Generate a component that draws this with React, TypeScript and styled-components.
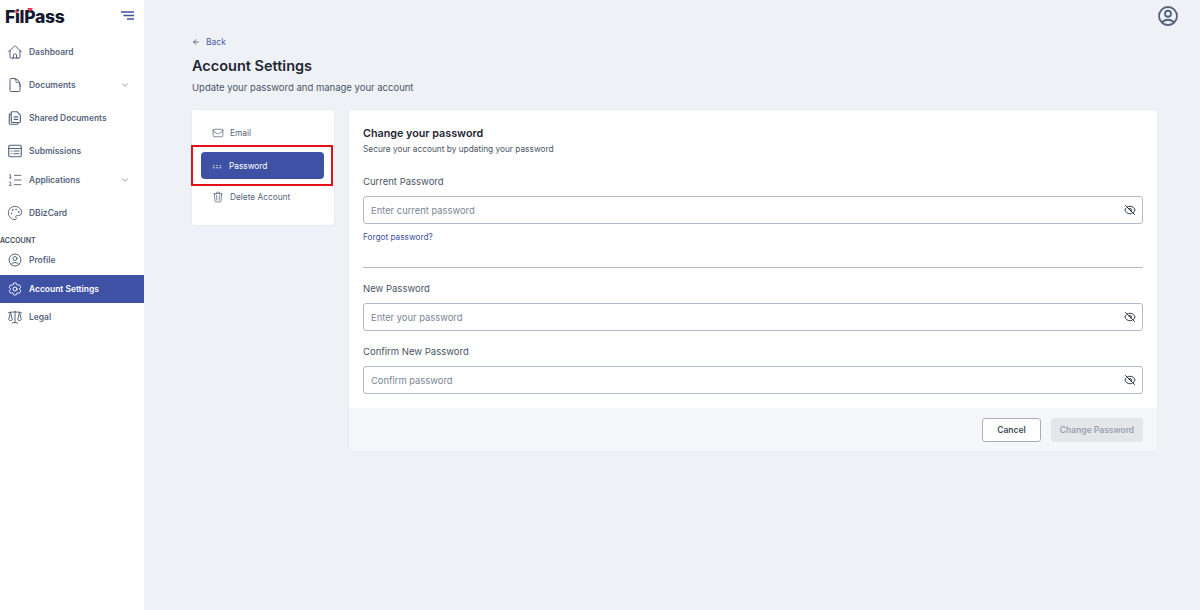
import styled, { createGlobalStyle } from "styled-components";
import { ChevronDown, ArrowLeft, Palette, ListOrdered } from "lucide-react";
import {
  HiOutlineHome,
  HiOutlineDocument,
  HiOutlineUserCircle,
  HiOutlineCog6Tooth,
  HiOutlineScale,
  HiOutlineEnvelope,
  HiOutlineTrash,
  HiOutlineEyeSlash,
} from "react-icons/hi2";
import type { ReactNode } from "react";

const GlobalStyle = createGlobalStyle`
  html, body {
    margin: 0;
    padding: 0;
    height: 100%;
    background: #eef1f6;
    font-family: Inter, "Liberation Sans", sans-serif;
  }
  * { box-sizing: border-box; }
`;

const Shell = styled.div`
  display: flex;
  width: 1200px;
  height: 610px;
  overflow: hidden;
`;

const Sidebar = styled.aside`
  width: 144px;
  flex: none;
  background: #fff;
`;

const LogoBar = styled.div`
  height: 35px;
  display: flex;
  align-items: center;
  justify-content: space-between;
  padding: 0 10px 3px 5px;
`;

const Logo = styled.div`
  position: relative;
  font-family: Inter, "Liberation Sans", sans-serif;
  font-weight: 800;
  font-size: 17.5px;
  letter-spacing: -0.3px;
  color: #14192f;
`;

const LogoMark = styled.span`
  position: absolute;
  top: 2px;
  left: 22px;
  width: 0;
  height: 0;
  border-left: 3.5px solid transparent;
  border-right: 3.5px solid transparent;
  border-top: 4px solid #e8394a;
`;

const LogoDot = styled.span`
  position: absolute;
  top: 4px;
  left: 10px;
  width: 3px;
  height: 3px;
  border-radius: 50%;
  background: #e8394a;
`;

const NavItem = styled.div<{ $h?: number; $active?: boolean }>`
  height: ${(p) => p.$h ?? 33.2}px;
  display: flex;
  align-items: center;
  gap: 6px;
  padding: 0 14px 0 7px;
  font-size: 8.45px;
  font-weight: 600;
  color: ${(p) => (p.$active ? "#fff" : "#56657d")};
  background: ${(p) => (p.$active ? "#3f51a5" : "transparent")};

  svg {
    flex: none;
    color: ${(p) => (p.$active ? "#fff" : "#56657d")};
  }
`;

const NavGap = styled.div`
  height: 4px;
`;

const NavLabel = styled.span`
  flex: 1;
  white-space: nowrap;
`;

const SectionLabel = styled.div`
  height: 14px;
  margin-top: 2px;
  padding-top: 4px;
  font-size: 7px;
  font-weight: 600;
  color: #434d5e;
`;

const Main = styled.main`
  flex: 1;
  position: relative;
  padding: 36px 43px 0 48px;
`;

const Avatar = styled.div`
  position: absolute;
  top: 4px;
  right: 20px;
  color: #56657d;
  line-height: 0;
`;

const BackLink = styled.div`
  display: flex;
  align-items: center;
  gap: 6px;
  height: 12px;
  font-size: 8.5px;
  color: #4a5ca8;

  svg {
    color: #333a48;
  }
`;

const Title = styled.h1`
  margin: 9px 0 0;
  height: 17px;
  line-height: 17px;
  font-size: 14.5px;
  font-weight: 600;
  color: #1f2733;
`;

const Subtitle = styled.p`
  margin: 7px 0 0;
  height: 14px;
  line-height: 14px;
  font-size: 9.5px;
  color: #4b5565;
`;

const Columns = styled.div`
  display: flex;
  align-items: flex-start;
  gap: 15px;
  margin-top: 15px;
`;

const Card = styled.div`
  background: #fff;
  border-radius: 3px;
  box-shadow: 0 0 0 1px #e9ecf1;
`;

const SideCard = styled(Card)`
  width: 142px;
  height: 115px;
  flex: none;
  padding: 9px 9px 0;
`;

const SideItem = styled.div<{ $active?: boolean }>`
  position: relative;
  height: ${(p) => (p.$active ? 27 : 33)}px;
  margin: ${(p) => (p.$active ? "0 1px 0 0" : "0")};
  display: flex;
  align-items: center;
  gap: ${(p) => (p.$active ? 7 : 6.5)}px;
  padding-left: ${(p) => (p.$active ? 11 : 10.5)}px;
  border-radius: 4px;
  font-size: 8.3px;
  color: ${(p) => (p.$active ? "#fff" : "#5a6678")};
  background: ${(p) => (p.$active ? "#3f51a5" : "transparent")};

  &:first-child {
    padding-bottom: 5px;
  }

  &:last-child {
    padding-top: 3px;
  }
`;

const Highlight = styled.span`
  position: absolute;
  inset: -7px -9px -7px -10px;
  border: 2px solid #e3101c;
`;

const FormCard = styled(Card)`
  flex: 1;
  height: 341px;
  display: flex;
  flex-direction: column;
`;

const FormBody = styled.div`
  flex: 1;
  padding: 17px 14px 0;
`;

const FormTitle = styled.h2`
  margin: 0;
  height: 14px;
  line-height: 14px;
  font-size: 10.75px;
  font-weight: 600;
  color: #1f2733;
`;

const FormHint = styled.p`
  margin: 3px 0 0;
  height: 11px;
  line-height: 11px;
  font-size: 8.3px;
  color: #4b5565;
`;

const FieldLabel = styled.div<{ $top: number }>`
  margin-top: ${(p) => p.$top}px;
  height: 13px;
  line-height: 13px;
  font-size: 9.5px;
  color: #4b5565;
`;

const InputBox = styled.div`
  margin-top: 8px;
  height: 28px;
  display: flex;
  align-items: center;
  justify-content: space-between;
  padding: 0 6px 0 7px;
  border: 1px solid #b4bbc8;
  border-radius: 3px;
  background: #fff;
`;

const PasswordInput = styled.input`
  flex: 1;
  border: 0;
  outline: 0;
  padding: 0;
  background: transparent;
  font: 400 9.4px Inter, "Liberation Sans", sans-serif;
  color: #1f2733;

  &::placeholder {
    color: #7b8594;
    opacity: 1;
  }
`;

const EyeButton = styled.span`
  display: flex;
  color: #2e3644;
`;

const ForgotLink = styled.div`
  margin-top: 8px;
  height: 10px;
  line-height: 10px;
  font-size: 8.25px;
  font-weight: 400;
  color: #3f51a5;
`;

const Divider = styled.hr`
  margin: 25px 0 0;
  border: 0;
  border-top: 1px solid #b4bbc8;
`;

const FormFooter = styled.div`
  height: 43px;
  flex: none;
  display: flex;
  justify-content: flex-end;
  align-items: center;
  gap: 10px;
  padding: 0 14px;
  background: #f4f6fa;
  border-radius: 0 0 3px 3px;
`;

const CancelButton = styled.button`
  width: 59px;
  height: 24px;
  padding: 0;
  border: 1px solid #a8afbc;
  border-radius: 3px;
  background: #fff;
  font: 600 8.5px Inter, "Liberation Sans", sans-serif;
  color: #3f4a5c;
`;

const SubmitButton = styled.button`
  width: 92px;
  height: 24px;
  padding: 0;
  border: 0;
  border-radius: 3px;
  background: #e4e6ea;
  font: 600 8.5px Inter, "Liberation Sans", sans-serif;
  color: #9aa2af;
`;

const MenuLines = () => (
  <svg width="13" height="10" viewBox="0 0 13 10" fill="none" stroke="#3f51a5" strokeWidth="1.6">
    <path d="M0 1h13M2.5 4.5h10.5M6 8h7" />
  </svg>
);

const SharedDocsIcon = () => (
  <svg width="16" height="16" viewBox="0 0 14 14" fill="none" stroke="currentColor" strokeWidth="1" strokeLinejoin="round">
    <path d="M4.5 1.5h4.2l3 3v5.6a.8.8 0 0 1-.8.8H4.5a.8.8 0 0 1-.8-.8V2.3a.8.8 0 0 1 .8-.8z" />
    <path d="M5.8 6h4M5.8 8.2h4" />
    <path d="M3.7 3.6H2.8a.8.8 0 0 0-.8.8v7.3a.8.8 0 0 0 .8.8H9a.8.8 0 0 0 .8-.8v-.8" />
  </svg>
);

const SubmissionsIcon = () => (
  <svg width="16" height="16" viewBox="0 0 14 14" fill="none" stroke="currentColor" strokeWidth="1" strokeLinecap="round">
    <rect x="1.5" y="2" width="11" height="10" rx="1.2" />
    <path d="M1.5 4.8h11M3.6 7h.6M3.6 9.4h.6M6 7h4.6M6 9.4h4.6" />
  </svg>
);

const DotsIcon = () => (
  <svg width="10" height="6" viewBox="0 0 10 6" fill="#fff" stroke="#fff" strokeWidth="0.7">
    <path d="M0.5 4.8h2.4M3.8 4.8h2.4M7.1 4.8h2.4" />
    <circle cx="1.7" cy="2.6" r="0.7" stroke="none" />
    <circle cx="5" cy="2.6" r="0.7" stroke="none" />
    <circle cx="8.3" cy="2.6" r="0.7" stroke="none" />
  </svg>
);

function Nav({ icon, label, more, active, h }: { icon: ReactNode; label: string; more?: boolean; active?: boolean; h?: number }) {
  return (
    <NavItem $active={active} $h={h}>
      {icon}
      <NavLabel>{label}</NavLabel>
      {more && <ChevronDown size={10} strokeWidth={1.6} />}
    </NavItem>
  );
}

function PasswordField({ label, top, placeholder }: { label: string; top: number; placeholder: string }) {
  return (
    <>
      <FieldLabel $top={top}>{label}</FieldLabel>
      <InputBox>
        <PasswordInput type="password" placeholder={placeholder} />
        <EyeButton>
          <HiOutlineEyeSlash size={12} strokeWidth={2} />
        </EyeButton>
      </InputBox>
    </>
  );
}

export default function App() {
  return (
    <>
      <GlobalStyle />
      <Shell>
        <Sidebar>
          <LogoBar>
            <Logo>
              FilPass
              <LogoDot />
              <LogoMark />
            </Logo>
            <MenuLines />
          </LogoBar>
          <Nav icon={<HiOutlineHome size={16} />} label="Dashboard" />
          <Nav icon={<HiOutlineDocument size={16} />} label="Documents" more />
          <Nav icon={<SharedDocsIcon />} label="Shared Documents" />
          <Nav icon={<SubmissionsIcon />} label="Submissions" />
          <Nav icon={<ListOrdered size={16} strokeWidth={1.4} />} label="Applications" more h={25} />
          <NavGap />
          <Nav icon={<Palette size={16} strokeWidth={1.4} />} label="DBizCard" />
          <SectionLabel>ACCOUNT</SectionLabel>
          <Nav icon={<HiOutlineUserCircle size={16} />} label="Profile" h={29} />
          <Nav icon={<HiOutlineCog6Tooth size={16} />} label="Account Settings" active h={28} />
          <Nav icon={<HiOutlineScale size={16} />} label="Legal" h={29} />
        </Sidebar>
        <Main>
          <Avatar>
            <HiOutlineUserCircle size={24} strokeWidth={1.8} />
          </Avatar>
          <BackLink>
            <ArrowLeft size={8} strokeWidth={2} />
            Back
          </BackLink>
          <Title>Account Settings</Title>
          <Subtitle>Update your password and manage your account</Subtitle>
          <Columns>
            <SideCard>
              <SideItem>
                <HiOutlineEnvelope size={12} />
                Email
              </SideItem>
              <SideItem $active>
                <DotsIcon />
                Password
                <Highlight />
              </SideItem>
              <SideItem>
                <HiOutlineTrash size={12} />
                Delete Account
              </SideItem>
            </SideCard>
            <FormCard>
              <FormBody>
                <FormTitle>Change your password</FormTitle>
                <FormHint>Secure your account by updating your password</FormHint>
                <PasswordField label="Current Password" top={20} placeholder="Enter current password" />
                <ForgotLink>Forgot password?</ForgotLink>
                <Divider />
                <PasswordField label="New Password" top={14} placeholder="Enter your password" />
                <PasswordField label="Confirm New Password" top={14} placeholder="Confirm password" />
              </FormBody>
              <FormFooter>
                <CancelButton type="button">Cancel</CancelButton>
                <SubmitButton type="button" disabled>
                  Change Password
                </SubmitButton>
              </FormFooter>
            </FormCard>
          </Columns>
        </Main>
      </Shell>
    </>
  );
}
